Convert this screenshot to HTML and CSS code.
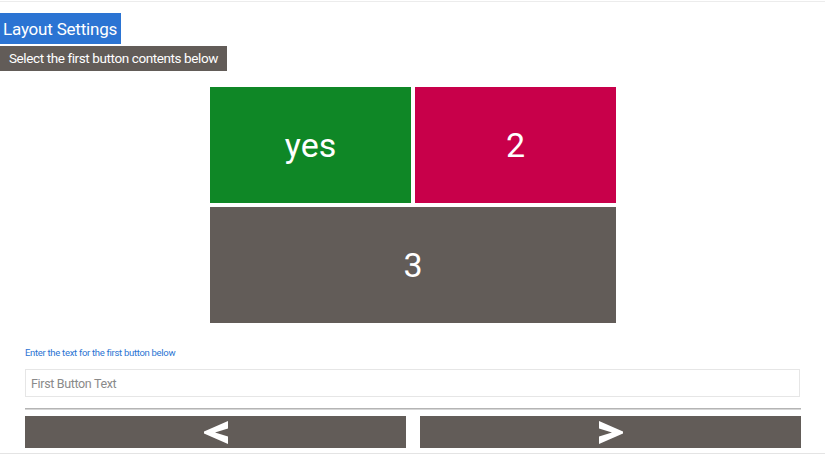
FILE: index.html
```html
<!DOCTYPE html>
<html>
<head>
<meta charset="utf-8">
<link rel="stylesheet" href="styles.css">
</head>
<body>
<div class="page">
  <div class="topline"></div>
  <div class="head">
    <div class="title">Layout Settings</div>
    <div class="subtitle">Select the first button contents below</div>
  </div>
  <div class="grid">
    <div class="cell green">yes</div>
    <div class="cell magenta">2</div>
    <div class="cell gray wide">3</div>
  </div>
  <div class="form">
    <div class="label">Enter the text for the first button below</div>
    <input class="field" type="text" placeholder="First Button Text">
    <div class="rule"></div>
    <div class="nav">
      <div class="navbtn">
        <svg width="24" height="23" viewBox="0 0 24 23"><polygon points="24,0 24,7.5 11,11.5 24,15.5 24,23 0,12.5 0,10.5" fill="#fff"/></svg>
      </div>
      <div class="navbtn">
        <svg width="24" height="23" viewBox="0 0 24 23"><polygon points="0,0 0,7.5 13,11.5 0,15.5 0,23 24,12.5 24,10.5" fill="#fff"/></svg>
      </div>
    </div>
  </div>
  <div class="bottomline"></div>
</div>
</body>
</html>
```
FILE: styles.css
```css
html, body {
  margin: 0;
  padding: 0;
  background: #fff;
}
body {
  font-family: Roboto, "Liberation Sans", sans-serif;
  width: 825px;
  height: 455px;
  overflow: hidden;
}
.page {
  display: flex;
  flex-direction: column;
  height: 455px;
}
.topline {
  margin-top: 1px;
  height: 1px;
  background: #ececec;
}
.head {
  display: flex;
  flex-direction: column;
  align-items: flex-start;
  margin-top: 11px;
}
.title {
  background: #2b74d3;
  color: #fff;
  font-size: 17px;
  letter-spacing: -0.2px;
  height: 31px;
  line-height: 32px;
  padding: 0 4px 0 3px;
  white-space: nowrap;
}
.subtitle {
  margin-top: 2px;
  background: #625c58;
  color: #fff;
  font-size: 13.5px;
  letter-spacing: -0.4px;
  height: 25px;
  line-height: 25px;
  padding: 0 9px 0 9px;
  white-space: nowrap;
}
.grid {
  margin: 16px 0 0 210px;
  width: 406px;
  display: grid;
  grid-template-columns: 201px 201px;
  grid-template-rows: 116px 116px;
  gap: 4px;
}
.cell {
  color: #fff;
  font-size: 34px;
  display: flex;
  align-items: center;
  justify-content: center;
}
.green { background: #0f8726; }
.magenta { background: #c8004a; }
.gray { background: #625c58; }
.wide { grid-column: 1 / 3; }
.form {
  padding: 0 24px 0 25px;
  display: flex;
  flex-direction: column;
}
.label {
  margin-top: 24px;
  font-size: 9.5px;
  letter-spacing: -0.3px;
  color: #2b74d3;
  height: 12px;
  line-height: 12px;
  white-space: nowrap;
}
.field {
  margin: 10px 1px 0 0;
  box-sizing: border-box;
  height: 28px;
  border: 1px solid #e6e6e6;
  padding: 0 5px;
  font-family: Roboto, "Liberation Sans", sans-serif;
  font-size: 12.5px;
  letter-spacing: -0.35px;
  outline: none;
}
.field::placeholder {
  color: #8a8a8a;
}
.rule {
  margin-top: 11px;
  height: 1px;
  background: #b4b4b4;
  border-bottom: 1px solid #d6d6d6;
}
.nav {
  margin-top: 6px;
  display: grid;
  grid-template-columns: 1fr 1fr;
  gap: 14px;
}
.navbtn {
  background: #625c58;
  height: 32px;
  display: flex;
  align-items: center;
  justify-content: center;
}
.bottomline {
  margin-top: 5px;
  height: 1px;
  background: #e4e4e4;
}
```
